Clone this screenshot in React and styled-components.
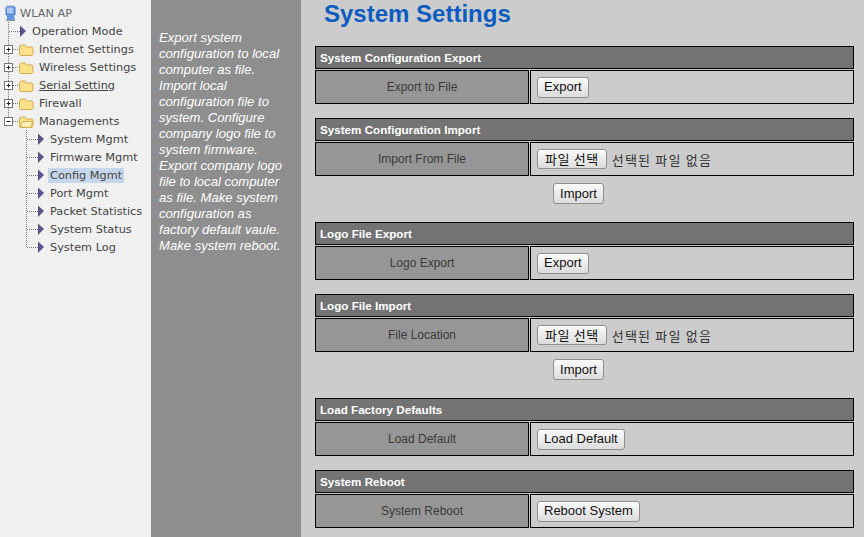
import React from "react";
import styled, { createGlobalStyle } from "styled-components";

const GlobalStyle = createGlobalStyle`
  html, body {
    margin: 0;
    padding: 0;
    width: 864px;
    height: 537px;
    overflow: hidden;
    background: #cccccc;
  }
`;

const Page = styled.div`
  display: flex;
  width: 864px;
  height: 537px;
  overflow: hidden;
`;

const Sidebar = styled.nav`
  width: 151px;
  flex: none;
  background: #f0f0f0;
  padding-top: 4px;
  box-sizing: border-box;
  font-family: "DejaVu Sans", Verdana, sans-serif;
  font-size: 11.3px;
  color: #444;
`;

const TreeRow = styled.div`
  display: flex;
  align-items: center;
  height: 18px;
`;

const Label = styled.span`
  white-space: nowrap;
  color: ${(p) => (p.$root ? "#666" : "#444")};
  text-decoration: ${(p) => (p.$underline ? "underline" : "none")};
  background: ${(p) => (p.$selected ? "#c6d6ea" : "transparent")};
  padding: 1px 2px;
  margin-left: ${(p) => p.$offset || 0}px;
`;

const Lines = styled.svg`
  width: ${(p) => p.$w}px;
  height: 18px;
  flex: none;
`;

const Dots = styled.path`
  stroke: #777;
  stroke-width: 1;
  stroke-dasharray: 1 1;
  fill: none;
`;

const ComputerIcon = () => (
  <Lines $w={18} viewBox="0 0 18 18">
    <path d="M5.500 3.500l2-1.500h6.500l1.500 1.500v7l-1.500 1.500h-7l-1.500-1.500z" fill="#4f86e0" stroke="#9fb2cc" />
    <rect x="7" y="3.500" width="6.500" height="6" fill="#a9c8f0" />
    <path d="M7 12h7l1 4.500h-8z" fill="#5f93e6" />
    <rect x="6" y="15.500" width="9" height="1.500" fill="#8d98ab" />
  </Lines>
);

const Arrow = () => <polygon points="0,0 6,5.500 0,11.500" fill="#55558a" />;

const PageLeaf = ({ last, indent, reach }) => (
  <Lines $w={reach + 10} viewBox={`0 0 ${reach + 10} 18`}>
    <Dots d={`M${indent + 0.5} 0V${last ? 9 : 18}M${indent + 1} 9.500H${reach}`} />
    <g transform={`translate(${reach} 3.500)`}>
      <Arrow />
    </g>
  </Lines>
);

const Folder = ({ open }) => (
  <g transform="translate(19 4)">
    <path
      d="M0.500 3l1.500-2h4l1.500 2h5.500l1 1v6.500l-1 1h-11.500l-1-1z"
      fill="#fde08a"
      stroke="#d0ae50"
    />
    {open && <path d="M1 11l2.500-5.500h10.500l-2.500 6z" fill="#fff0b4" stroke="#d0ae50" />}
  </g>
);

const FolderIcon = ({ open }) => (
  <Lines $w={37} viewBox="0 0 37 18">
    <Dots d={`M8.500 0V${open ? 5 : 18}M13 9.500H19`} />
    <rect x="4.500" y="5.500" width="8" height="8" fill="#fff" stroke="#777" />
    <path d={open ? "M6.500 9.500h4" : "M6.500 9.500h4M8.500 7.500v4"} stroke="#222" fill="none" />
    <Folder open={open} />
  </Lines>
);

const Hint = styled.aside`
  width: 150px;
  flex: none;
  background: #8e8e8e;
  box-sizing: border-box;
  padding: 30px 8px 0 8px;
  color: #fff;
  font-family: "Liberation Sans", Arial, sans-serif;
  font-size: 13.1px;
  font-style: italic;
  line-height: 16px;
`;

const Main = styled.main`
  flex: 1;
  min-width: 0;
  padding: 0 10px 0 14px;
  box-sizing: border-box;
  font-family: "Liberation Sans", Arial, sans-serif;
`;

const Heading = styled.h1`
  margin: 0 0 19px 9px;
  height: 27px;
  line-height: 27px;
  font-size: 24px;
  font-weight: bold;
  color: #0a5cc0;
`;

const Section = styled.section`
  margin-bottom: 14px;
`;

const SectionTitle = styled.div`
  height: 23px;
  box-sizing: border-box;
  border: 1px solid #000;
  background: #737373;
  color: #fff;
  font-size: 11.65px;
  font-weight: bold;
  line-height: 21px;
  padding-left: 4px;
`;

const Row = styled.div`
  display: flex;
  gap: 1px;
  margin-top: 1px;
`;

const NameCell = styled.div`
  width: 214px;
  height: 34px;
  flex: none;
  box-sizing: border-box;
  border: 1px solid #000;
  background: #969696;
  color: #3a3a3a;
  font-size: 12px;
  line-height: 33px;
  text-align: center;
`;

const ValueCell = styled.div`
  flex: 1;
  height: 34px;
  box-sizing: border-box;
  border: 1px solid #000;
  background: #cccccc;
  display: flex;
  align-items: center;
  padding-left: 6px;
  font-size: 13px;
  color: #111;
`;

const Button = styled.button`
  height: 21px;
  box-sizing: border-box;
  padding: 0 6px;
  border: 1px solid #8f8f8f;
  border-radius: 3px;
  background: linear-gradient(#fafafa, #dcdcdc);
  color: #111;
  font-family: "Liberation Sans", Arial, sans-serif;
  font-size: 13px;
  line-height: 18px;
`;

const FileButton = styled(Button)`
  height: 20px;
  padding: 0 7px;
  font-family: "Noto Sans CJK KR", sans-serif;
  letter-spacing: 0.6px;
  margin-right: 5px;
`;

const FileText = styled.span`
  font-family: "Noto Sans CJK KR", sans-serif;
  font-size: 13px;
  letter-spacing: 1.2px;
  color: #333;
`;

const Submit = styled.div`
  display: flex;
  justify-content: center;
  padding: 7px 12px 4px 0;
`;

const tree = [
  { label: "Internet Settings" },
  { label: "Wireless Settings" },
  { label: "Serial Setting", underline: true },
  { label: "Firewall" },
];

const leaves = [
  "System Mgmt",
  "Firmware Mgmt",
  "Config Mgmt",
  "Port Mgmt",
  "Packet Statistics",
  "System Status",
  "System Log",
];

const sections = [
  { title: "System Configuration Export", name: "Export to File", button: "Export" },
  { title: "System Configuration Import", name: "Import From File", file: true },
  { title: "Logo File Export", name: "Logo Export", button: "Export" },
  { title: "Logo File Import", name: "File Location", file: true },
  { title: "Load Factory Defaults", name: "Load Default", button: "Load Default" },
  { title: "System Reboot", name: "System Reboot", button: "Reboot System" },
];

export default function App() {
  return (
    <Page>
      <GlobalStyle />
      <Sidebar>
        <TreeRow>
          <ComputerIcon />
          <Label $root>WLAN AP</Label>
        </TreeRow>
        <TreeRow>
          <PageLeaf indent={8} reach={20} />
          <Label>Operation Mode</Label>
        </TreeRow>
        {tree.map((t) => (
          <TreeRow key={t.label}>
            <FolderIcon />
            <Label $underline={t.underline}>{t.label}</Label>
          </TreeRow>
        ))}
        <TreeRow>
          <FolderIcon open />
          <Label>Managements</Label>
        </TreeRow>
        {leaves.map((l, i) => (
          <TreeRow key={l}>
            <PageLeaf indent={26} reach={38} last={i === leaves.length - 1} />
            <Label $selected={l === "Config Mgmt"}>{l}</Label>
          </TreeRow>
        ))}
      </Sidebar>
      <Hint>
        Export system configuration to local computer as file. Import local configuration file to
        system. Configure company logo file to system firmware. Export company logo file to local
        computer as file. Make system configuration as factory default vaule. Make system reboot.
      </Hint>
      <Main>
        <Heading>System Settings</Heading>
        {sections.map((s) => (
          <Section key={s.title}>
            <SectionTitle>{s.title}</SectionTitle>
            <Row>
              <NameCell>{s.name}</NameCell>
              <ValueCell>
                {s.file ? (
                  <>
                    <FileButton>파일 선택</FileButton>
                    <FileText>선택된 파일 없음</FileText>
                  </>
                ) : (
                  <Button>{s.button}</Button>
                )}
              </ValueCell>
            </Row>
            {s.file && (
              <Submit>
                <Button>Import</Button>
              </Submit>
            )}
          </Section>
        ))}
      </Main>
    </Page>
  );
}
